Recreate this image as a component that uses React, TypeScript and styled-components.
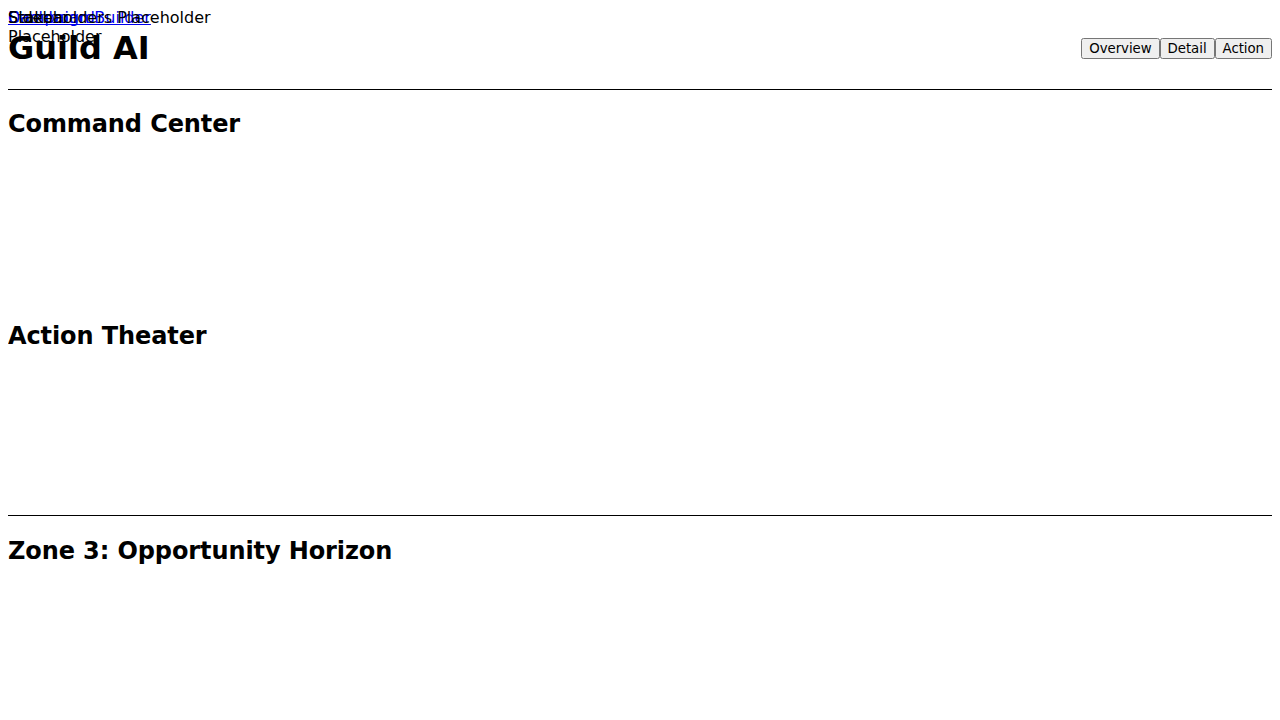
import * as React from 'react';
import styled, { createGlobalStyle } from 'styled-components';

const GlobalStyle = createGlobalStyle`
  body {
    margin: 8px;
    font-family: "DejaVu Sans", sans-serif;
    color: #000;
    background: #fff;
  }
`;

const Page = styled.div`
  position: relative;
`;

// the unstyled nav and placeholders all stack on the same spot
const Overlay = styled.div`
  position: absolute;
  top: 0;
  left: 0;
  width: 0;
  height: 0;
`;

const Layer = styled.div<{ $width?: number }>`
  position: absolute;
  top: 0;
  left: 0;
  width: ${(p) => (p.$width ? `${p.$width}px` : 'max-content')};
  font-size: 16px;
  a {
    color: #0000ee;
  }
`;

const Header = styled.header`
  display: flex;
  justify-content: space-between;
  align-items: center;
  border-bottom: 1px solid #000;
`;

const Title = styled.h1`
  font-size: 2em;
  margin: 0.67em 0;
`;

const ButtonGroup = styled.div`
  display: flex;
  margin-right: 0;
`;

const ViewButton = styled.button`
  font-family: "DejaVu Sans", sans-serif;
  font-size: 13.333px;
  padding: 1px 6px;
  letter-spacing: -0.05px;
`;

const Zones = styled.main`
  border-bottom: 1px solid #000;
`;

const Zone = styled.section``;

const ZoneTitle = styled.h2<{ $top?: number }>`
  font-size: 1.5em;
  margin: ${(p) => (p.$top ? `${p.$top}px` : '0.83em')} 0 0.83em;
  letter-spacing: -0.1px;
`;

const ZoneBody = styled.div<{ $height?: number }>`
  height: ${(p) => p.$height ?? 144}px;
`;

const App: React.FC = () => {
  return (
    <>
      <GlobalStyle />
      <Page>
        <Overlay>
          <Layer>
            <a href="#">Dashboard</a>
          </Layer>
          <Layer>
            <a href="#">Campaign Builder</a>
          </Layer>
          <Layer>Stakeholders Placeholder</Layer>
          <Layer $width={100}>Sidebar Placeholder</Layer>
        </Overlay>
        <Header>
          <Title>Guild AI</Title>
          <ButtonGroup>
            <ViewButton>Overview</ViewButton>
            <ViewButton>Detail</ViewButton>
            <ViewButton>Action</ViewButton>
          </ButtonGroup>
        </Header>
        <Zones>
          <Zone>
            <ZoneTitle>Command Center</ZoneTitle>
            <ZoneBody />
          </Zone>
          <Zone>
            <ZoneTitle>Action Theater</ZoneTitle>
            <ZoneBody $height={145} />
          </Zone>
        </Zones>
        <Zone>
          <ZoneTitle $top={21}>Zone 3: Opportunity Horizon</ZoneTitle>
          <ZoneBody />
        </Zone>
      </Page>
    </>
  );
};

export default App;
